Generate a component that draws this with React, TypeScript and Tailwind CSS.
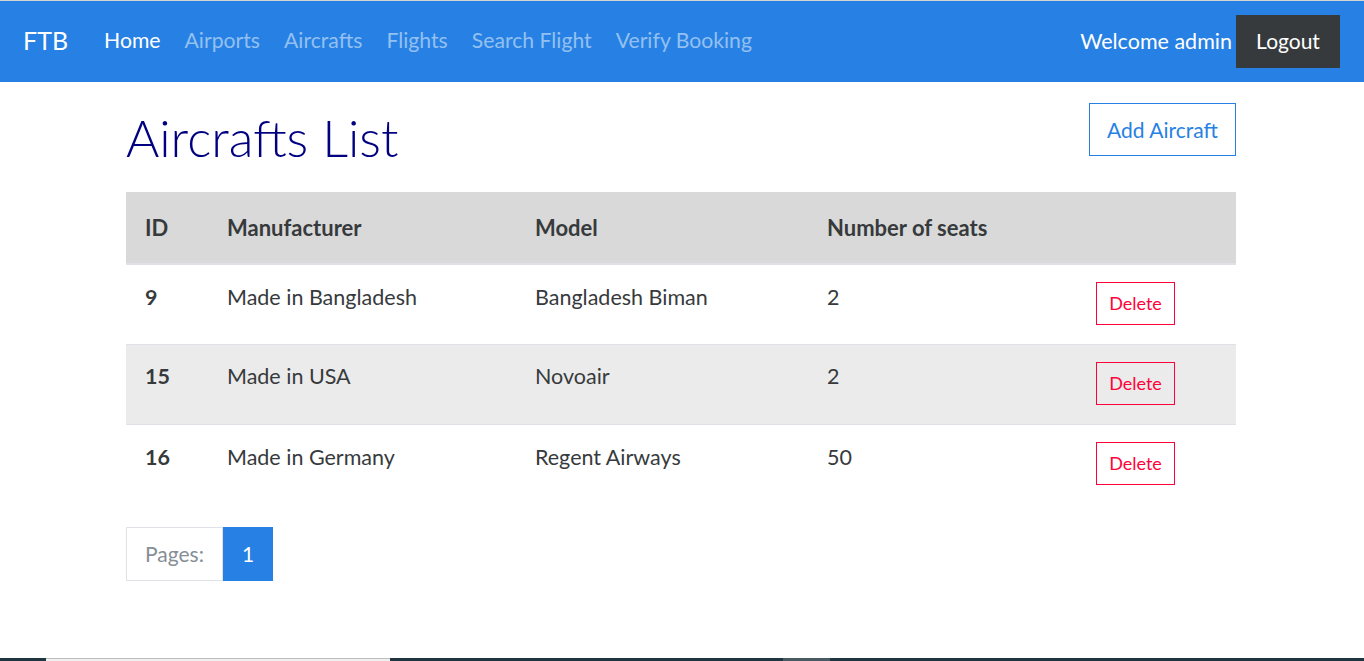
import React from "react"

const aircrafts = [
  { id: 9, manufacturer: "Made in Bangladesh", model: "Bangladesh Biman", seats: 2 },
  { id: 15, manufacturer: "Made in USA", model: "Novoair", seats: 2 },
  { id: 16, manufacturer: "Made in Germany", model: "Regent Airways", seats: 50 },
]

const navLinks = ["Airports", "Aircrafts", "Flights", "Search Flight", "Verify Booking"]

export default function App() {
  return (
    <div
      className="flex flex-col h-[661px] bg-white text-[#373a3c] overflow-hidden"
      style={{ fontFamily: "Lato, 'Open Sans', sans-serif" }}
    >
      <div className="h-px bg-[#d4d4d4]" />
      <nav className="flex items-center h-[81px] bg-[#2780e3] pl-[23px] pr-[24px]">
        <span className="text-[25px] text-white mr-[36px] mb-[1px]">FTB</span>
        <ul className="flex items-center gap-[24px] text-[21.2px] mb-[1px]">
          <li className="text-white">Home</li>
          {navLinks.map((l) => (
            <li key={l} className="text-[#93c0f1]">
              {l}
            </li>
          ))}
        </ul>
        <div className="ml-auto flex items-center gap-[4px]">
          <span className="text-[21.5px] text-white mb-[1px]">Welcome admin</span>
          <button className="h-[53px] w-[104px] bg-[#373a3c] text-white text-[21px] mb-[1px]">Logout</button>
        </div>
      </nav>

      <main className="flex-1 w-[1110px] mx-[126px]">
        <div className="flex items-start justify-between mt-[21px]">
          <h1 className="text-[51px] font-light text-[#000080] leading-none mt-[9px]">Aircrafts List</h1>
          <button className="h-[53px] w-[147px] border border-[#2780e3] text-[#2780e3] text-[21px]">
            Add Aircraft
          </button>
        </div>

        <table className="w-full mt-[29px] text-[21.5px] border-collapse">
          <thead>
            <tr className="bg-[#d9d9d9] border-b-2 border-[#dee2e6] h-[72px] text-left text-[22px]">
              <th className="w-[82px] pl-[19px] font-bold">ID</th>
              <th className="w-[308px] pl-[19px] font-bold">Manufacturer</th>
              <th className="w-[292px] pl-[19px] font-bold">Model</th>
              <th className="w-[269px] pl-[19px] font-bold">Number of seats</th>
              <th />
            </tr>
          </thead>
          <tbody>
            {aircrafts.map((a, i) => (
              <tr
                key={a.id}
                className={`h-[80px] border-t border-[#dee2e6] ${i % 2 === 1 ? "bg-[#ebebeb]" : "bg-white"}`}
              >
                <td className="pl-[19px] font-bold pb-[15px]">{a.id}</td>
                <td className="pl-[19px] pb-[15px]">{a.manufacturer}</td>
                <td className="pl-[19px] pb-[15px]">{a.model}</td>
                <td className="pl-[19px] pb-[15px]">{a.seats}</td>
                <td className="pl-[19px] pb-[2px]">
                  <button className="h-[43px] w-[79px] border border-[#ff0039] text-[#ff0039] text-[18px]">
                    Delete
                  </button>
                </td>
              </tr>
            ))}
          </tbody>
        </table>

        <div className="flex mt-[23px] text-[21px]">
          <span className="flex items-center justify-center h-[54px] w-[97px] border border-[#dee2e6] text-[#868e96]">
            Pages:
          </span>
          <span className="flex items-center justify-center h-[54px] w-[50px] bg-[#2780e3] text-white">1</span>
        </div>
      </main>

      <div className="flex h-[3px] bg-[#1f3640]">
        <div className="w-[46px]" />
        <div className="w-[344px] bg-[#f0f0f0] border-t border-[#bdbdbd]" />
        <div className="w-[393px]" />
        <div className="w-[47px] bg-[#4a5a62]" />
      </div>
    </div>
  )
}
